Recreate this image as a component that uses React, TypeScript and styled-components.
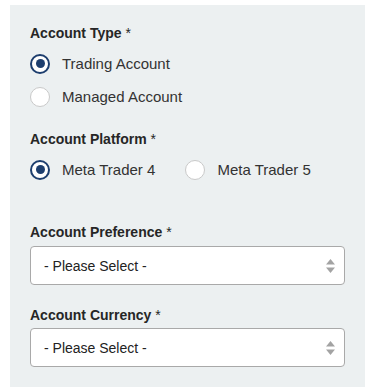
import React, { useState } from "react";
import styled, { createGlobalStyle } from "styled-components";

const GlobalStyle = createGlobalStyle`
  html, body {
    margin: 0;
    padding: 0;
    background: #ffffff;
    font-family: "Liberation Sans", Arial, sans-serif;
  }
`;

type Option = { value: string; label: string };

const Panel = styled.div`
  box-sizing: border-box;
  margin: 5px 10px 0;
  min-height: calc(100vh - 5px);
  padding: 18px 20px 0 20px;
  background: #ecf0f1;
`;

const Group = styled.div<{ $gap: number }>`
  margin-bottom: ${(p) => p.$gap}px;
`;

const Label = styled.div<{ $gap?: number }>`
  font-size: 14px;
  line-height: 20px;
  font-weight: bold;
  color: #262626;
  margin-bottom: ${(p) => p.$gap ?? 4}px;

  span {
    font-weight: normal;
  }
`;

const RadioList = styled.div<{ $inline?: boolean }>`
  display: flex;
  flex-direction: ${(p) => (p.$inline ? "row" : "column")};
  gap: ${(p) => (p.$inline ? "30px" : "0")};
`;

const RadioRow = styled.label`
  display: flex;
  align-items: center;
  height: 33px;
  gap: 12px;
  font-size: 15px;
  color: #333333;
  cursor: pointer;
`;

const RadioInput = styled.input`
  appearance: none;
  margin: 0;
  box-sizing: border-box;
  width: 20px;
  height: 20px;
  border-radius: 50%;
  border: 1px solid #c9c9c9;
  background: #ffffff;
  display: grid;
  place-items: center;
  cursor: pointer;

  &::after {
    content: "";
    width: 9px;
    height: 9px;
    border-radius: 50%;
    background: #1d3e6e;
    transform: scale(0);
  }

  &:checked {
    border: 2px solid #1d3e6e;
  }

  &:checked::after {
    transform: scale(1);
  }
`;

const SelectWrap = styled.div`
  position: relative;
`;

const Select = styled.select`
  appearance: none;
  box-sizing: border-box;
  width: 100%;
  height: 39px;
  margin: 0;
  padding: 0 30px 0 13px;
  border: 1px solid #a9a9a9;
  border-radius: 4px;
  background: #ffffff;
  font-family: "Liberation Sans", Arial, sans-serif;
  font-size: 14px;
  color: #222222;
  outline: none;
`;

const Arrows = styled.svg`
  position: absolute;
  right: 10px;
  top: 50%;
  transform: translateY(-50%);
  pointer-events: none;
`;

const RadioGroup = ({
  name,
  options,
  inline,
}: {
  name: string;
  options: Option[];
  inline?: boolean;
}) => {
  const [value, setValue] = useState(options[0].value);
  return (
    <RadioList $inline={inline}>
      {options.map((o) => (
        <RadioRow key={o.value}>
          <RadioInput
            type="radio"
            name={name}
            value={o.value}
            checked={value === o.value}
            onChange={() => setValue(o.value)}
          />
          {o.label}
        </RadioRow>
      ))}
    </RadioList>
  );
};

const SelectField = ({ name }: { name: string }) => (
  <SelectWrap>
    <Select name={name} defaultValue="">
      <option value="">- Please Select -</option>
    </Select>
    <Arrows width="9" height="14" viewBox="0 0 9 14">
      <path d="M4.5 0 L9 5.5 L0 5.5 Z" fill="#a3a3a3" />
      <path d="M0 8.5 L9 8.5 L4.5 14 Z" fill="#a3a3a3" />
    </Arrows>
  </SelectWrap>
);

const App = () => {
  return (
    <>
      <GlobalStyle />
      <Panel>
        <Group $gap={16}>
          <Label>
            Account Type <span>*</span>
          </Label>
          <RadioGroup
            name="accountType"
            options={[
              { value: "trading", label: "Trading Account" },
              { value: "managed", label: "Managed Account" },
            ]}
          />
        </Group>
        <Group $gap={36}>
          <Label>
            Account Platform <span>*</span>
          </Label>
          <RadioGroup
            name="platform"
            inline
            options={[
              { value: "mt4", label: "Meta Trader 4" },
              { value: "mt5", label: "Meta Trader 5" },
            ]}
          />
        </Group>
        <Group $gap={20}>
          <Label>
            Account Preference <span>*</span>
          </Label>
          <SelectField name="preference" />
        </Group>
        <Group $gap={20}>
          <Label $gap={3}>
            Account Currency <span>*</span>
          </Label>
          <SelectField name="currency" />
        </Group>
      </Panel>
    </>
  );
};

export default App;
